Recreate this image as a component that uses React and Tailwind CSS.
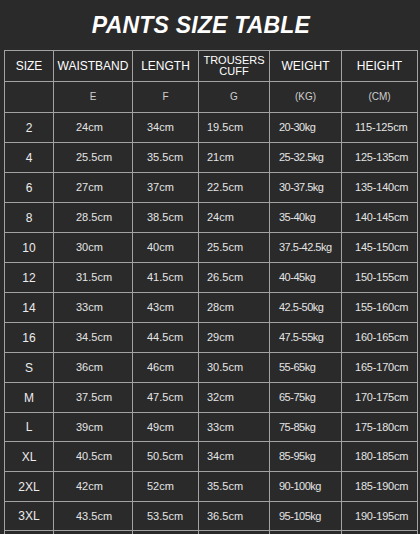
import React from "react";

const rows = [
  ["2", "24cm", "34cm", "19.5cm", "20-30kg", "115-125cm", "h-[30px]"],
  ["4", "25.5cm", "35.5cm", "21cm", "25-32.5kg", "125-135cm", "h-[30px]"],
  ["6", "27cm", "37cm", "22.5cm", "30-37.5kg", "135-140cm", "h-[30px]"],
  ["8", "28.5cm", "38.5cm", "24cm", "35-40kg", "140-145cm", "h-[30px]"],
  ["10", "30cm", "40cm", "25.5cm", "37.5-42.5kg", "145-150cm", "h-[30px]"],
  ["12", "31.5cm", "41.5cm", "26.5cm", "40-45kg", "150-155cm", "h-[30px]"],
  ["14", "33cm", "43cm", "28cm", "42.5-50kg", "155-160cm", "h-[30px]"],
  ["16", "34.5cm", "44.5cm", "29cm", "47.5-55kg", "160-165cm", "h-[30px]"],
  ["S", "36cm", "46cm", "30.5cm", "55-65kg", "165-170cm", "h-[30px]"],
  ["M", "37.5cm", "47.5cm", "32cm", "65-75kg", "170-175cm", "h-[30px]"],
  ["L", "39cm", "49cm", "33cm", "75-85kg", "175-180cm", "h-[29px]"],
  ["XL", "40.5cm", "50.5cm", "34cm", "85-95kg", "180-185cm", "h-[30px]"],
  ["2XL", "42cm", "52cm", "35.5cm", "90-100kg", "185-190cm", "h-[30px]"],
  ["3XL", "43.5cm", "53.5cm", "36.5cm", "95-105kg", "190-195cm", "h-[29px]"],
];

const cell = "border-r border-b border-[#a2a2a2] flex items-center";
const pads = [
  "",
  "pl-[22px]",
  "pl-[14px]",
  "pl-[8px]",
  "pl-[9px] tracking-[-0.5px]",
  "pl-[13px] tracking-[-0.2px]",
];

export default function App() {
  return (
    <div
      className="w-[420px] h-[534px] bg-[#2a2a2a] overflow-hidden"
      style={{ fontFamily: '"Liberation Sans", Arial, sans-serif' }}
    >
      <div className="h-[50px] flex items-center justify-center pr-[18px]">
        <h1 className="text-[23px] leading-none font-black italic text-white tracking-[0.2px]">
          PANTS SIZE TABLE
        </h1>
      </div>
      <div className="ml-[4px] w-[414px] border-l border-t border-[#a2a2a2] grid grid-cols-[49px_79px_66px_71px_72px_76px]">
        {["SIZE", "WAISTBAND", "LENGTH", null, "WEIGHT", "HEIGHT"].map((h, i) => (
          <div key={"h" + i} className={cell + " h-[31px] justify-center text-white text-[12px] leading-none"}>
            {h === null ? (
              <div className="flex flex-col items-center text-[11px] leading-[11px]">
                <span>TROUSERS</span>
                <span>CUFF</span>
              </div>
            ) : (
              <span>{h}</span>
            )}
          </div>
        ))}
        {["", "E", "F", "G", "(KG)", "(CM)"].map((h, i) => (
          <div key={"u" + i} className={cell + " h-[31px] justify-center text-[#cfcfcf] text-[10px] leading-none"}>
            {h}
          </div>
        ))}
        {rows.map((r) =>
          r.slice(0, 6).map((v, i) => (
            <div
              key={r[0] + i}
              className={
                cell +
                " " +
                r[6] +
                " leading-none " +
                (i === 0
                  ? "justify-center text-[12px] text-[#ececec]"
                  : "text-[11px] text-[#e4e4e4] " + pads[i])
              }
            >
              {v}
            </div>
          ))
        )}
        {[0, 1, 2, 3, 4, 5].map((i) => (
          <div key={"e" + i} className="h-[10px] border-r border-[#a2a2a2]" />
        ))}
      </div>
    </div>
  );
}
